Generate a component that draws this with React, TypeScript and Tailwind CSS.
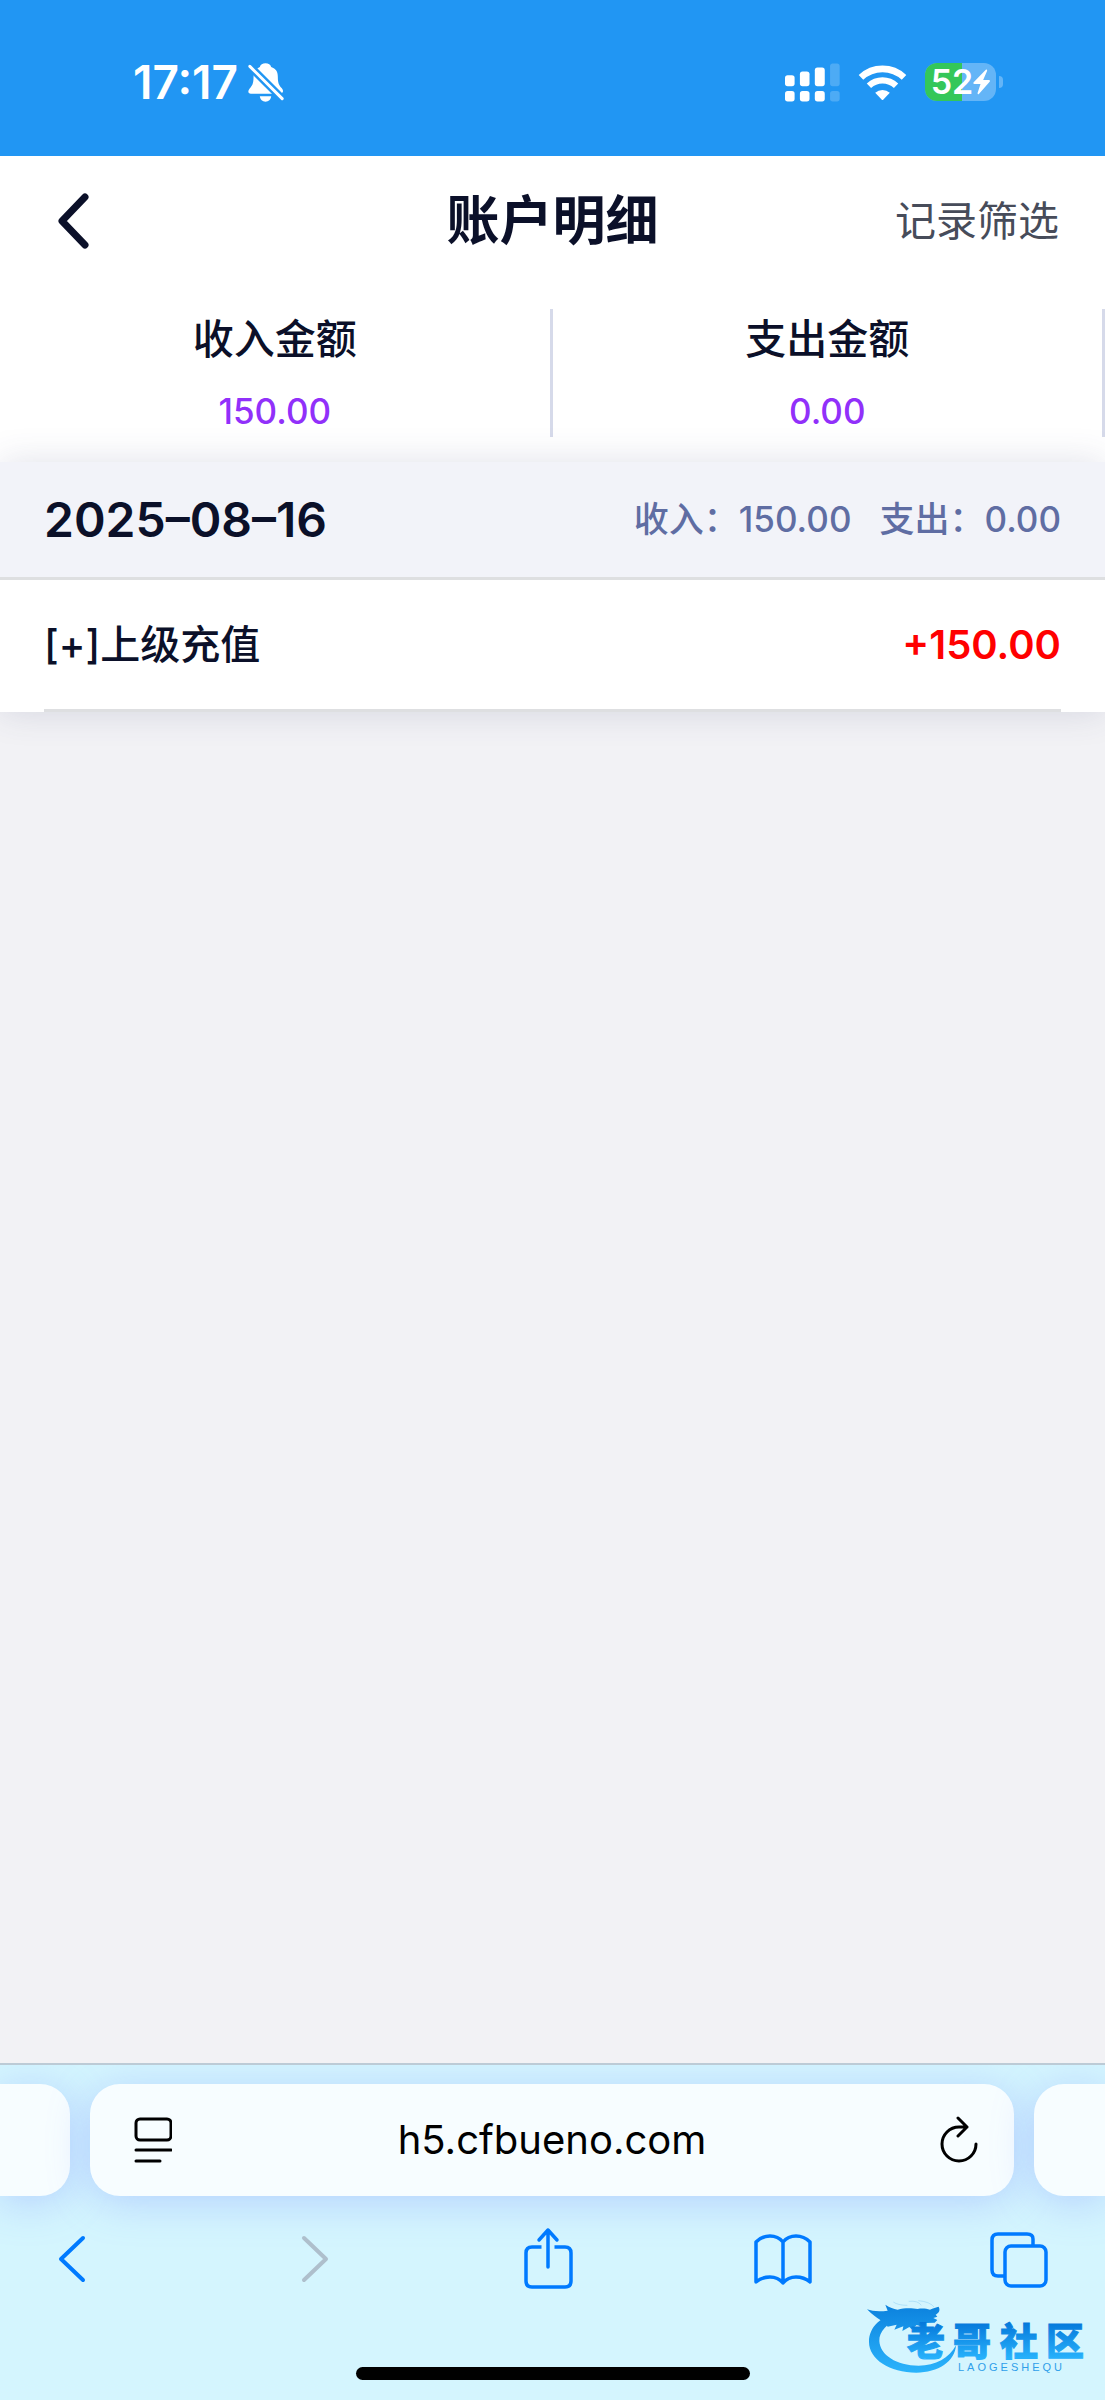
import type { ReactNode } from "react";

const entries = [{ id: 1, title: "[+]上级充值", amount: "+150.00" }];

const totals = [
  { label: "收入金额", value: "150.00" },
  { label: "支出金额", value: "0.00" },
];

function MutedBell() {
  return (
    <svg viewBox="447 68 107 117" className="h-[39px] w-9" aria-label="静音" role="img">
      <path
        d="M499 69c-9 0-15 4-17 11-14 6-19 18-19 32 0 18-4 24-12 33-6 7-4 15 4 15h88c8 0 12-8 5-16-8-9-12-15-12-34 0-17-6-25-20-30-2-7-8-11-17-11Z"
        fill="#fff"
      />
      <path d="M482 168h34c-1 10-8 16-17 16s-16-6-17-16Z" fill="#fff" />
      <path d="M445 71 556 182" stroke="#2196f3" strokeWidth="23" />
      <path d="M452 78 549 175" stroke="#fff" strokeWidth="9" strokeLinecap="round" />
    </svg>
  );
}

function Signal() {
  return (
    <svg viewBox="72 65 166 116" className="h-[39px] w-[55px]" aria-label="信号" role="img" fill="#fff">
      <rect x="72" y="101" width="29" height="33" rx="8" />
      <rect x="117" y="90" width="29" height="44" rx="8" />
      <rect x="162" y="78" width="30" height="56" rx="8" />
      <rect x="208" y="66" width="29" height="68" rx="8" opacity=".2" />
      <rect x="72" y="149" width="29" height="31" rx="8" />
      <rect x="117" y="149" width="29" height="31" rx="8" />
      <rect x="162" y="149" width="30" height="31" rx="8" />
      <rect x="208" y="149" width="29" height="31" rx="8" opacity=".2" />
    </svg>
  );
}

function Wifi() {
  return (
    <svg viewBox="292 66 148 110" className="h-[37px] w-[49px]" aria-label="无线网络" role="img">
      <path d="M301 105.500A95 95 0 0 1 431 105.500" fill="none" stroke="#fff" strokeWidth="20" />
      <path d="M325 131A60 60 0 0 1 407 131" fill="none" stroke="#fff" strokeWidth="19" />
      <path d="M344 152A33 33 0 0 1 388 152L368 173Q366 175 364 173Z" fill="#fff" />
    </svg>
  );
}

function Battery() {
  return (
    <div className="flex items-center gap-[3px]">
      <div className="relative flex h-[38px] w-[71px] items-center justify-center rounded-xl bg-[#64b5f7] text-[34px] leading-[38px] font-semibold">
        <span className="absolute inset-y-0 left-0 w-[52%] rounded-l-xl bg-[#34c759]" />
        <span className="relative">52</span>
        <svg viewBox="641 84 52 78" className="relative h-[26px] w-[17px]" fill="#fff" aria-hidden="true">
          <path d="M681 85 643 124q-3 5 3 5h18l-9 28q0 5 4 3l33-38q3-5-3-5h-17l12-28q1-5-3-4Z" />
        </svg>
      </div>
      <span className="h-3 w-1 rounded-r-full bg-[#64b5f7]" />
    </div>
  );
}

function TabCard({ className, children }: { className: string; children?: ReactNode }) {
  return (
    <div className={`h-28 bg-[#f7fdff] shadow-[0_6px_40px_rgba(130,150,255,0.38)] ${className}`}>{children}</div>
  );
}

function CommunityLogo() {
  return (
    <svg
      viewBox="0 0 224 76"
      className="absolute right-4 bottom-6 h-[76px] w-56"
      role="img"
      aria-label="老哥社区 LAOGESHEQU"
    >
      <defs>
        <linearGradient id="ring" x1="0" y1="65" x2="0" y2="280" gradientUnits="userSpaceOnUse">
          <stop offset="0" stopColor="#0a7fdc" />
          <stop offset="1" stopColor="#2bb4fc" />
        </linearGradient>
        <linearGradient id="word" x1="0" y1="22" x2="0" y2="58" gradientUnits="userSpaceOnUse">
          <stop offset="0" stopColor="#0577da" />
          <stop offset="1" stopColor="#27b1fb" />
        </linearGradient>
      </defs>
      <g transform="scale(.3333) translate(-45 -60)" fill="url(#ring)">
        <path d="M150 100C95 105 57 140 57 186c0 52 62 92 142 92 66 0 116-34 119-82-20 38-61 61-112 61-66 0-116-32-118-74-1-28 23-54 62-70Z" />
        <path d="M51 88c16 6 38 7 62 4l-7-18c14 9 24 13 37 15 20-6 44-5 60-2 14-3 26-1 37 2 8-4 20-7 26-9 5 10 2 18-9 24l5 6-12 4 12 6-8 8-30 1-14 9-10-3-15 13-7-7-21 12 3-14-27 10 7-15-27 6c-12-18-29-19-62-52Z" />
        <path
          d="M130 66q14 10 42 10M176 64q28-3 38 12M205 62q35 3 48 20"
          fill="none"
          stroke="#2196e8"
          strokeWidth="2"
          opacity=".3"
        />
      </g>
      <text
        x="42 88 135 181"
        y="55"
        fill="url(#word)"
        stroke="url(#word)"
        strokeWidth="1"
        className="font-['Noto_Sans_CJK_SC',sans-serif] text-[38px] font-black"
      >
        老哥社区
      </text>
      <text x="93" y="71" fill="#2f9fea" className="font-['Liberation_Sans',sans-serif] text-[11px] tracking-[3px]">
        LAOGESHEQU
      </text>
    </svg>
  );
}

const stroke = {
  fill: "none",
  stroke: "currentColor",
  strokeLinecap: "round" as const,
  strokeLinejoin: "round" as const,
};

export default function App() {
  return (
    <div className="flex min-h-screen flex-col bg-[#f2f2f5] font-[Inter,'Noto_Sans_CJK_SC',sans-serif] text-[#0b1029]">
      <div className="flex h-[156px] items-center justify-between bg-[#2196f3] pt-2 pr-[102px] pl-[133px] text-white">
        <div className="flex items-center gap-2.5">
          <time className="text-[46px] leading-none font-semibold">17:17</time>
          <MutedBell />
        </div>
        <div className="flex items-center gap-[18px]">
          <Signal />
          <Wifi />
          <Battery />
        </div>
      </div>

      <header className="grid h-[130px] grid-cols-[1fr_auto_1fr] items-center bg-white px-[46px]">
        <button type="button" aria-label="返回" className="justify-self-start px-3">
          <svg viewBox="0 0 32 56" className="h-14 w-8" {...stroke} strokeWidth="7">
            <path d="M27 4 4 28l23 24" />
          </svg>
        </button>
        <h1 className="text-[53px] leading-none font-bold">账户明细</h1>
        <button type="button" className="justify-self-end text-[41px] leading-none text-[#474c5a]">
          记录筛选
        </button>
      </header>

      <dl className="grid grid-cols-2 bg-white pt-[23px] pb-[25px] text-center">
        {totals.map((t) => (
          <div key={t.label} className="flex h-32 flex-col border-r-[3px] border-[#d6daea]">
            <dt className="pt-1 text-[41px] leading-[52px] font-medium">{t.label}</dt>
            <dd className="pt-5 text-[35px] leading-[52px] font-medium text-[#9130fa]">{t.value}</dd>
          </div>
        ))}
      </dl>

      <main className="grow">
        <section className="bg-white shadow-[0_0_34px_rgba(60,70,120,0.16)]">
          <div className="flex h-[118px] items-center justify-between border-b-[3px] border-[#dedfe1] bg-[#f2f3f9] px-[44px]">
            <h2 className="text-[48px] leading-none font-semibold">2025–08–16</h2>
            <p className="flex gap-7 text-[35px] leading-none font-medium text-[#5f6da3]">
              <span>收入：150.00</span>
              <span>支出：0.00</span>
            </p>
          </div>
          <ul className="px-[44px]">
            {entries.map((e) => (
              <li
                key={e.id}
                className="flex h-[132px] items-center justify-between border-b-[3px] border-[#dedfe1] text-[40px] leading-none"
              >
                <span className="font-medium">{e.title}</span>
                <span className="font-semibold text-[#ff0000]">{e.amount}</span>
              </li>
            ))}
          </ul>
        </section>
      </main>

      <footer className="relative flex h-[337px] flex-col overflow-hidden border-t-2 border-[#bccbd6] bg-[#d4f5fe] pt-[19px]">
        <div className="flex gap-5">
          <TabCard className="w-[70px] rounded-r-[30px]" />
          <TabCard className="flex min-w-0 grow items-center justify-between rounded-[30px] pr-7 pl-11 text-black">
            <button type="button" aria-label="页面菜单">
              <svg viewBox="0 0 38 46" className="h-[46px] w-[38px]" {...stroke} strokeWidth="3">
                <rect x="2" y="2" width="35" height="21" rx="4" />
                <path d="M2 33h35M2 44h24" />
              </svg>
            </button>
            <input
              aria-label="网址"
              defaultValue="h5.cfbueno.com"
              className="min-w-0 grow bg-transparent text-center text-[40px] outline-none"
            />
            <button type="button" aria-label="重新加载" className="px-2">
              <svg viewBox="0 0 38 48" className="h-12 w-[38px]" {...stroke} strokeWidth="3">
                <path d="M36 28A17 17 0 1 1 19 11h8M18 2l9 9-9 9" />
              </svg>
            </button>
          </TabCard>
          <TabCard className="w-[71px] rounded-l-[30px]" />
        </div>

        <nav aria-label="浏览器工具栏" className="flex justify-between pt-7 pr-[56px] pl-[42px] text-[#007aff]">
          <button type="button" aria-label="后退">
            <svg viewBox="0 0 60 70" className="h-[70px] w-[60px]" {...stroke} strokeWidth="4">
              <path d="M41 14 19 35l22 21" />
            </svg>
          </button>
          <button type="button" aria-label="前进" disabled className="text-[#aebfcc]">
            <svg viewBox="0 0 60 70" className="h-[70px] w-[60px]" {...stroke} strokeWidth="4">
              <path d="m25 14 22 21-22 21" />
            </svg>
          </button>
          <button type="button" aria-label="分享">
            <svg viewBox="0 0 60 70" className="h-[70px] w-[60px]" {...stroke} strokeWidth="3.500">
              <path d="M32 43V6M23 16l9-10 9 10" />
              <path d="M25.500 23H16q-6 0-6 6v28q0 6 6 6h33q6 0 6-6V29q0-6-6-6h-10.500" strokeLinecap="butt" />
            </svg>
          </button>
          <button type="button" aria-label="书签">
            <svg viewBox="0 0 60 70" className="h-[70px] w-[60px]" {...stroke} strokeWidth="3.500">
              <path d="M31 18Q26 12 18 12T4 18V58Q10 53 18 53t13 6q5-6 13-6t14 5V18Q52 12 44 12t-13 6V59" />
            </svg>
          </button>
          <button type="button" aria-label="标签页">
            <svg viewBox="0 0 60 70" className="h-[70px] w-[60px]" {...stroke} strokeWidth="3.500">
              <rect x="16" y="22" width="41" height="40" rx="6" />
              <path d="M44 22v-7q0-5-6-5H9q-6 0-6 6v30q0 6 6 6h7" strokeLinecap="butt" />
            </svg>
          </button>
        </nav>

        <div className="mt-auto mb-5 h-[13px] w-[394px] self-center rounded-full bg-black" />
        <CommunityLogo />
      </footer>
    </div>
  );
}
